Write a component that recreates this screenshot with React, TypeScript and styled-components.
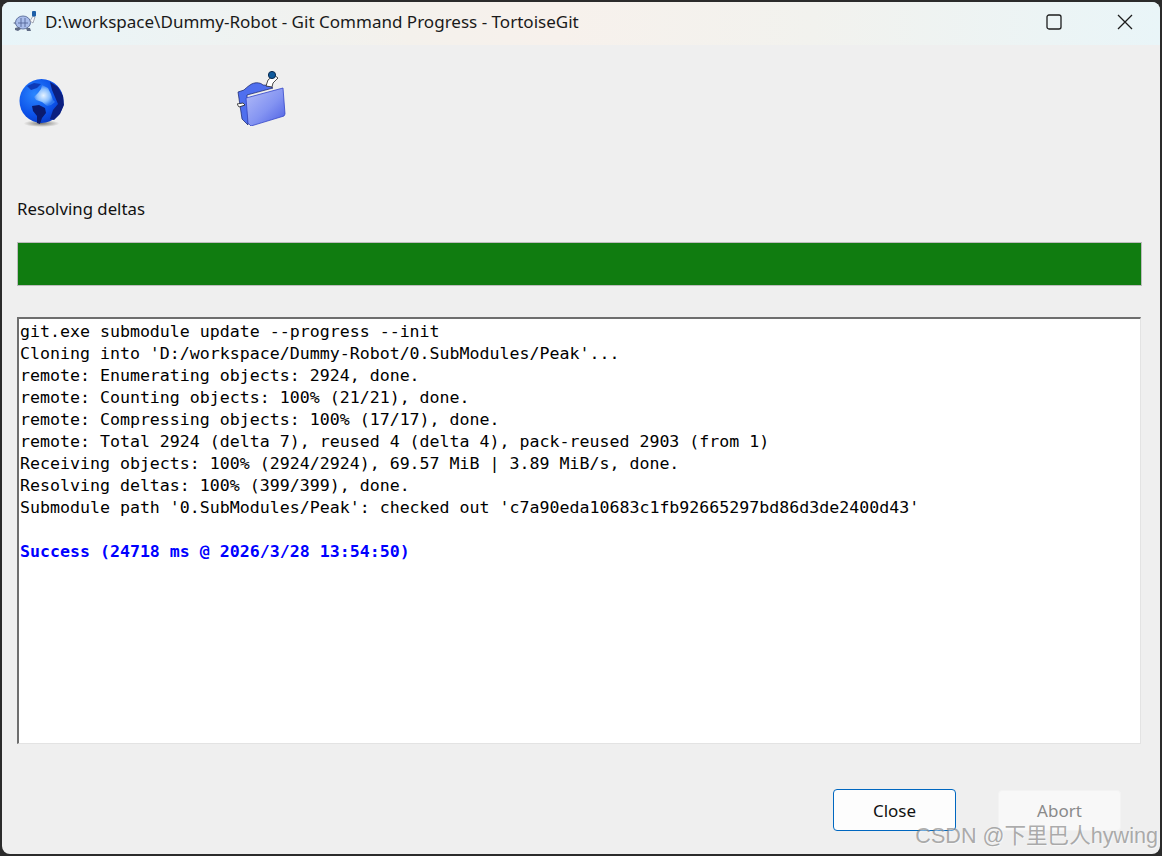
import React from "react";
import styled, { createGlobalStyle } from "styled-components";

const LOG_LINES = [
  "git.exe submodule update --progress --init",
  "Cloning into 'D:/workspace/Dummy-Robot/0.SubModules/Peak'...",
  "remote: Enumerating objects: 2924, done.",
  "remote: Counting objects: 100% (21/21), done.",
  "remote: Compressing objects: 100% (17/17), done.",
  "remote: Total 2924 (delta 7), reused 4 (delta 4), pack-reused 2903 (from 1)",
  "Receiving objects: 100% (2924/2924), 69.57 MiB | 3.89 MiB/s, done.",
  "Resolving deltas: 100% (399/399), done.",
  "Submodule path '0.SubModules/Peak': checked out 'c7a90eda10683c1fb92665297bd86d3de2400d43'",
  "",
];

const TurtleIcon = () => (
  <svg width="26" height="24" viewBox="0 0 26 24">
    <path d="M1 13l6-3 0 6z" fill="#77829c" />
    <ellipse cx="11" cy="12.5" rx="7.5" ry="6.5" fill="#a9bdea" stroke="#6577a3" />
    <path d="M6 13h10M9 8v9M13 8v9" stroke="#55689a" strokeWidth="0.9" fill="none" />
    <path d="M3 18l4-1 2 2-3 2-3-1zM14 18l4 0 1 3-4 0z" fill="#5f6b85" />
    <path d="M18 11l3-5 2 1-2 6z" fill="#f4f6fa" stroke="#778" strokeWidth="0.6" />
    <rect x="20" y="1" width="4" height="5.5" rx="1" fill="#1d5fa8" />
  </svg>
);

const GlobeIcon = () => (
  <svg width="50" height="50" viewBox="0 0 50 50">
    <defs>
      <radialGradient id="sea" cx="0.35" cy="0.35" r="0.8">
        <stop offset="0" stopColor="#2a86ff" />
        <stop offset="0.6" stopColor="#0b50e8" />
        <stop offset="1" stopColor="#0830b4" />
      </radialGradient>
      <radialGradient id="shade" cx="0.5" cy="0.5" r="0.5">
        <stop offset="0" stopColor="#7a7872" />
        <stop offset="1" stopColor="#efefef" />
      </radialGradient>
      <radialGradient id="land" cx="0.45" cy="0.5" r="0.5">
        <stop offset="0" stopColor="#e6f3ff" />
        <stop offset="0.6" stopColor="#8cc0ff" />
        <stop offset="1" stopColor="#2f78f0" />
      </radialGradient>
    </defs>
    <ellipse cx="23.5" cy="45.5" rx="18" ry="3.5" fill="url(#shade)" />
    <circle cx="23.5" cy="23" r="22" fill="url(#sea)" />
    <path d="M24 7l6 3 3 6 2 6 2 2-4 3-4 1-5-4-6-2-2-3 4-4 3-4z" fill="url(#land)" />
    <path d="M32 4l8 5 5 9 1 9-4 9-6 6-4-1 3-9 5-6-3-7-3-7z" fill="#0b1f80" />
    <path d="M14 28l7-1 6 3 1 5-4 5-2 6-3-1 0-7-4-5z" fill="#0a1a6e" />
    <path d="M9 8l7-3 7 1-4 4-6 2z" fill="#0d3bb8" />
  </svg>
);

const FolderIcon = () => (
  <svg width="50" height="56" viewBox="0 0 50 56">
    <defs>
      <linearGradient id="front" x1="0" y1="0" x2="1" y2="1">
        <stop offset="0" stopColor="#b4bdf8" />
        <stop offset="0.55" stopColor="#8494f2" />
        <stop offset="1" stopColor="#4a5de2" />
      </linearGradient>
    </defs>
    <path d="M1 22l4 27 6 6-1-30 26-7c-3-2-6-3-10-3-3-3-9-3-13 0-3 2-5 4-6 5z" fill="#4f6fee" stroke="#141f66" strokeWidth="0.7" />
    <path d="M9 28l37-10 2 26-1 2-33 10-3-3z" fill="url(#front)" stroke="#3346c8" strokeWidth="0.8" />
    <path d="M29 16l2-6 6-5 4 3-5 5-1 4z" fill="#fff" stroke="#222" strokeWidth="0.8" />
    <circle cx="35" cy="5" r="3.6" fill="#0f5a9c" stroke="#0a2a50" />
    <path d="M0 34l6-1 2 2-6 2z" fill="#fff" stroke="#222" strokeWidth="0.8" />
  </svg>
);

const App = () => {
  return (
    <>
      <GlobalStyle />
      <Window>
        <TitleBar>
          <TitleLeft>
            <TurtleIcon />
            <Title>D:\workspace\Dummy-Robot - Git Command Progress - TortoiseGit</Title>
          </TitleLeft>
          <WindowButtons>
            <WindowButton aria-label="Maximize">
              <svg width="16" height="16" viewBox="0 0 16 16">
                <rect x="1" y="1" width="14" height="14" rx="2" fill="none" stroke="#1c1c1c" strokeWidth="1.3" />
              </svg>
            </WindowButton>
            <WindowButton aria-label="Close">
              <svg width="16" height="16" viewBox="0 0 16 16">
                <path d="M1 1l14 14M15 1L1 15" stroke="#1c1c1c" strokeWidth="1.3" fill="none" />
              </svg>
            </WindowButton>
          </WindowButtons>
        </TitleBar>

        <Content>
          <Animation>
            <GlobeIcon />
            <FolderIcon />
          </Animation>

          <Status>Resolving deltas</Status>
          <ProgressTrack>
            <ProgressFill style={{ width: "100%" }} />
          </ProgressTrack>

          <Log>
            {LOG_LINES.map((line, i) => (
              <LogLine key={i}>{line}</LogLine>
            ))}
            <LogLine $success>Success (24718 ms @ 2026/3/28 13:54:50)</LogLine>
          </Log>

          <Footer>
            <DialogButton $primary>Close</DialogButton>
            <DialogButton disabled>Abort</DialogButton>
          </Footer>
        </Content>

        <Watermark>CSDN @下里巴人hywing</Watermark>
      </Window>
    </>
  );
};

export default App;

/*//////////////////////////////////////////////////////////////////////////
/////////////////////////////// S T Y L E  /////////////////////////////////
//////////////////////////////////////////////////////////////////////////*/

const GlobalStyle = createGlobalStyle`
  html, body {
    margin: 0;
    height: 100%;
    background: #2b2b2b;
    overflow: hidden;
  }
`;

const Window = styled.div`
  position: relative;
  box-sizing: border-box;
  width: 1158px;
  height: 852px;
  margin: 2px;
  display: flex;
  flex-direction: column;
  background: #efefef;
  border-radius: 8px;
  overflow: hidden;
  font-family: "Noto Sans", "Open Sans", sans-serif;
  color: #111;
`;

const TitleBar = styled.div`
  height: 43px;
  box-sizing: border-box;
  padding-bottom: 4px;
  flex: none;
  display: flex;
  align-items: center;
  justify-content: space-between;
  background: linear-gradient(90deg, #e8f5f9 0%, #f4f1ec 35%, #f7f1ec 48%, #f2f2ee 70%, #e9f5f8 100%);
`;

const TitleLeft = styled.div`
  display: flex;
  align-items: center;
  gap: 7px;
  padding-left: 10px;
`;

const Title = styled.div`
  font-size: 17.05px;
  color: #1a1a1a;
  white-space: nowrap;
`;

const WindowButtons = styled.div`
  display: flex;
  gap: 55px;
  padding-right: 27px;
`;

const WindowButton = styled.div`
  width: 16px;
  height: 16px;
  display: flex;
`;

const Content = styled.div`
  flex: 1;
  display: flex;
  flex-direction: column;
  padding: 0 18px 0 15px;
`;

const Animation = styled.div`
  height: 90px;
  padding-left: 1px;
  display: flex;
  gap: 169px;
  align-items: flex-start;
  padding-top: 25px;
  box-sizing: border-box;
  svg:first-child {
    margin-top: 8px;
  }
`;

const Status = styled.div`
  margin-top: 60px;
  height: 47px;
  font-size: 16.8px;
  line-height: 28px;
`;

const ProgressTrack = styled.div`
  height: 44px;
  box-sizing: border-box;
  border: 1px solid #bcbcbc;
  background: #e6e6e6;
`;

const ProgressFill = styled.div`
  height: 100%;
  background: #107c10;
`;

const Log = styled.div`
  margin: 31px 1px 0 0;
  height: 427px;
  box-sizing: border-box;
  padding: 2px 0 0 1px;
  background: #fff;
  border-style: solid;
  border-width: 2px 1px 1px 2px;
  border-color: #6e6e6e #e3e3e3 #e3e3e3 #6e6e6e;
`;

const LogLine = styled.div<{ $success?: boolean }>`
  height: 22px;
  font-family: "DejaVu Sans Mono", "Liberation Mono", monospace;
  font-size: 16.6px;
  line-height: 22px;
  white-space: pre;
  color: ${(p) => (p.$success ? "#0000ff" : "#000")};
  font-weight: ${(p) => (p.$success ? 700 : 400)};
`;

const Footer = styled.div`
  display: flex;
  justify-content: flex-end;
  align-items: center;
  gap: 42px;
  margin-top: 45px;
  padding-right: 21px;
`;

const DialogButton = styled.button<{ $primary?: boolean }>`
  box-sizing: border-box;
  width: 123px;
  height: ${(p) => (p.$primary ? "42px" : "41px")};
  padding: 0;
  border-radius: 4px;
  font-family: "Noto Sans", "Open Sans", sans-serif;
  font-size: 17px;
  background: ${(p) => (p.$primary ? "#fdfdfd" : "#f8f8f8")};
  border: ${(p) => (p.$primary ? "1.5px solid #0067c0" : "1px solid #f3f3f3")};
  color: ${(p) => (p.$primary ? "#111" : "#8a8a8a")};
`;

const Watermark = styled.div`
  position: absolute;
  right: 2px;
  bottom: 6px;
  font-family: "Liberation Sans", "Noto Sans CJK SC", sans-serif;
  font-size: 21.6px;
  line-height: 24px;
  color: rgba(120, 120, 120, 0.6);
  text-shadow: 1px 1px 1px rgba(255, 255, 255, 0.5);
  white-space: nowrap;
`;
